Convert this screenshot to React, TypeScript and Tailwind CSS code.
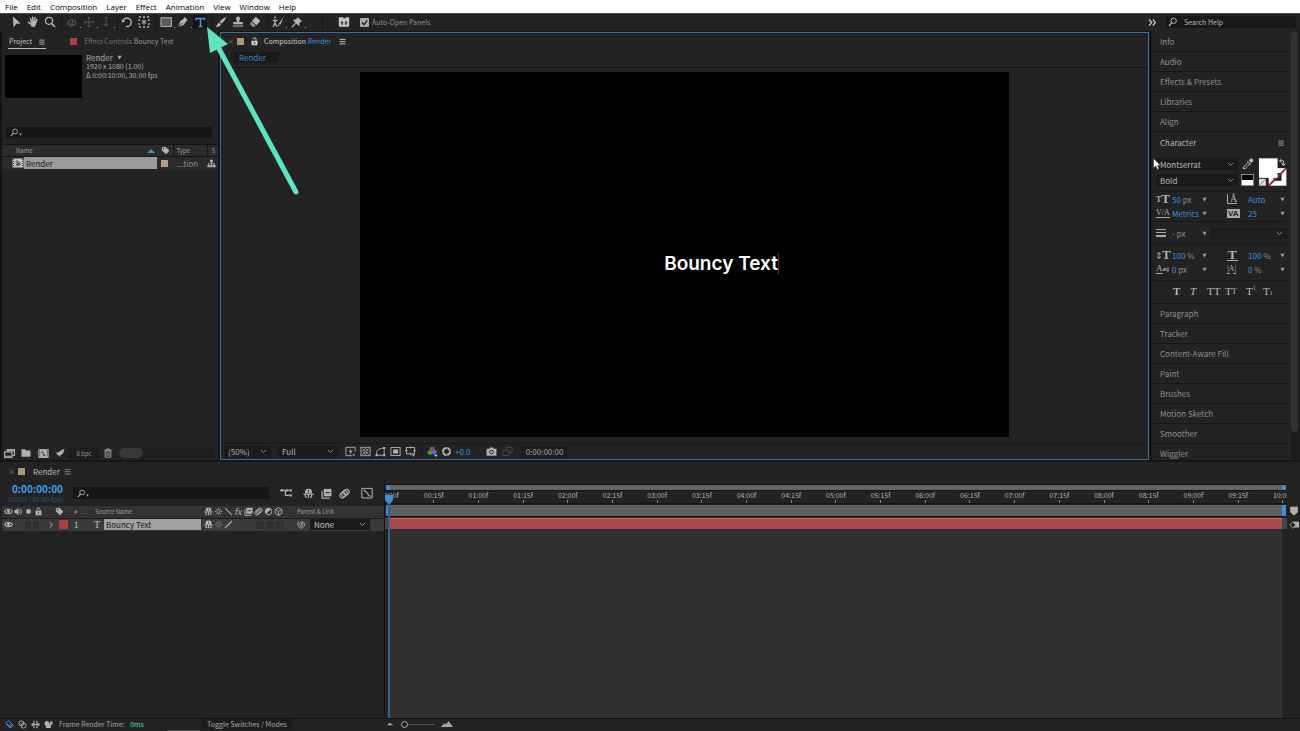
import React from "react";

type IconProps = { children: React.ReactNode; className?: string };

/* All glyph icons share a 12 x 12 grid and inherit the text colour. */
function Icon({ children, className = "size-3" }: IconProps) {
  return (
    <svg
      viewBox="0 0 12 12"
      className={"shrink-0 " + className}
      fill="none"
      stroke="currentColor"
      strokeWidth="1"
      aria-hidden="true"
    >
      {children}
    </svg>
  );
}

const icons = {
  select: <path d="M3 0.4 L10.6 7.6 L6.4 7.8 L3.4 11.2 Z" fill="currentColor" stroke="none" />,
  hand: (
    <g strokeLinecap="round" strokeWidth="1.5">
      <path d="M3.4 2.6 L4.6 6 M5.7 1.2 L6 5.6 M8 1.6 L7.5 5.8 M10 3.4 L8.8 6.8 M1.4 6 L3.6 8" />
      <path d="M3.6 7 L5 5.4 L8.8 5.8 L8.6 8.4 L7.4 10.8 L5 10.6 Z" fill="currentColor" strokeWidth="0.6" />
    </g>
  ),
  zoom: (
    <g strokeWidth="1.2">
      <circle cx="5" cy="4.8" r="3.5" />
      <path d="M7.6 7.4 L11 11" strokeWidth="1.6" />
    </g>
  ),
  orbit: (
    <g strokeWidth="1.2">
      <path d="M3.5 7.5 A3.4 2.4 0 1 1 9.5 6.5 M2.5 6 C0 8 3 9.6 6 9.2 M4.6 7.4 L7 9.2 L4.8 11" />
      <circle cx="8" cy="6.8" r="1.8" />
    </g>
  ),
  pan: (
    <g>
      <path d="M6 1 V11 M1 6 H11" />
      <path d="M4.4 2.4 L6 0.6 L7.6 2.4 Z M4.4 9.6 L6 11.4 L7.6 9.6 Z M2.4 4.4 L0.6 6 L2.4 7.6 Z M9.6 4.4 L11.4 6 L9.6 7.6 Z" fill="currentColor" stroke="none" />
    </g>
  ),
  dolly: <path d="M6 1 V10 M3.8 7.6 L6 10.4 L8.2 7.6 M4.6 1.4 H7.4" />,
  rotate: (
    <g strokeWidth="1.3">
      <path d="M2.2 4.4 A4.2 4.2 0 1 1 5 10.4" />
      <path d="M0.4 3.4 L1.2 6.6 L4.6 5.2 Z" fill="currentColor" stroke="none" />
    </g>
  ),
  anchor: (
    <g strokeWidth="1.3">
      <rect x="1" y="1" width="10" height="10" strokeDasharray="2 2" />
      <path d="M6 3.4 V8.6 M3.4 6 H8.6 M4 4 L8 8 M8 4 L4 8" strokeWidth="0.8" />
    </g>
  ),
  rect: <rect x="1" y="1.8" width="10.4" height="8.6" fill="#5a5a5a" />,
  pen: (
    <g>
      <path d="M7.4 0.8 L10.8 4.2 L9.4 5 L6.6 9 L1.4 10.8 L3 5.6 L6.8 2.4 Z" fill="currentColor" stroke="none" />
      <path d="M1.6 10.6 L5.4 6.8" stroke="#232323" strokeWidth="0.8" />
    </g>
  ),
  brush: (
    <path d="M11.4 0.6 C8 2.6 6 4.2 4.6 6 L6.6 7.8 C8.2 6 10.4 3.8 11.4 0.6 Z M4 6.6 L6 8.6 C5 10.6 3 11.2 0.6 11 C2.4 10 2 7.6 4 6.6 Z" fill="currentColor" stroke="none" />
  ),
  stamp: (
    <path d="M6 0.6 A2 2 0 0 1 7.6 3.8 L7 6 H10.8 V8.2 H1.2 V6 H5 L4.4 3.8 A2 2 0 0 1 6 0.6 Z M0.8 9.4 H11.2 V10.6 H0.8 Z" fill="currentColor" stroke="none" />
  ),
  eraser: (
    <g>
      <path d="M6.8 0.8 L11.4 5 L7.4 9.2 L2.8 5 Z" fill="currentColor" stroke="none" />
      <path d="M2.4 5.6 L6.8 9.8 L5.6 10.8 H3.6 L1 8.2 Z" stroke="none" fill="currentColor" opacity="0.75" />
    </g>
  ),
  roto: (
    <g strokeWidth="1.2">
      <path d="M3 3 V7 L1 11 M3 7 L5 10.6 M0.8 4.6 H5.4" />
      <circle cx="3" cy="1.4" r="0.9" fill="currentColor" stroke="none" />
      <path d="M11.6 1 L6.8 7.4 L8.4 8.8 Z M6.6 8 L7.8 9.2 L5.2 11 Z" fill="currentColor" stroke="none" />
    </g>
  ),
  pin: (
    <g>
      <path d="M6.6 1 L11 5.4 L9.8 5.8 L8.4 7.2 L8.4 9.4 L7.6 9.8 L2.2 4.4 L2.6 3.6 L4.8 3.6 L6.2 2.2 Z" fill="currentColor" stroke="none" />
      <path d="M4.8 7.2 L1 11" strokeWidth="1.2" />
    </g>
  ),
  openPanels: (
    <g>
      <path d="M0.8 1.2 H5 L6 2.6 H7 L8 1.2 H11.2 V10.8 H0.8 Z" fill="currentColor" stroke="none" />
      <path d="M4 5 V9 M8 5 V9 M2.8 7 H5.2 M6.8 7 H9.2" stroke="#232323" />
    </g>
  ),
  menu: <path d="M2 3.2 H10 M2 6.2 H10 M2 9.2 H10" strokeWidth="1.2" />,
  lock: (
    <g>
      <rect x="2" y="5" width="8" height="6" fill="currentColor" stroke="none" />
      <path d="M4 5 V3.4 A2 2 0 0 1 8 3.4 V5" strokeWidth="1.3" />
      <path d="M6 6.8 V9.2" stroke="#232323" />
    </g>
  ),
  unlock: (
    <g>
      <rect x="2" y="5" width="8" height="6" fill="currentColor" stroke="none" />
      <path d="M4 3.2 V3 A2 2 0 0 1 8 3 V5" strokeWidth="1.3" />
      <path d="M5 7 H7 M5 9 H7" stroke="#232323" />
    </g>
  ),
  search: (
    <g strokeWidth="1.2">
      <circle cx="6.8" cy="4.6" r="3.2" />
      <path d="M4.6 6.8 L1 10.8" strokeWidth="1.4" />
    </g>
  ),
  tag: (
    <g>
      <path d="M1 1.6 L6 1 L11.2 6.2 L6.8 11 L1.2 6 Z" fill="currentColor" stroke="none" />
      <circle cx="3.4" cy="3.6" r="0.9" fill="#232323" stroke="none" />
    </g>
  ),
  tree: (
    <g>
      <path d="M4.2 1 H7.8 V4.4 H4.2 Z M0.6 8 H3.8 V11 H0.6 Z M4.4 8 H7.6 V11 H4.4 Z M8.2 8 H11.4 V11 H8.2 Z" fill="currentColor" stroke="none" />
      <path d="M6 4 V8 M2.2 8 V6.2 H9.8 V8" />
    </g>
  ),
  film: (
    <g>
      <rect x="0.5" y="1.5" width="11" height="9" fill="#c4c4c4" stroke="none" />
      <path d="M1.6 2 V10 M10.4 2 V10" stroke="#333" strokeDasharray="1 1" />
      <circle cx="5" cy="4.8" r="1.6" fill="#4a8a8a" stroke="none" />
      <path d="M5.6 5 H8.4 V8.6 H5.6 Z" fill="#a04848" stroke="none" />
      <path d="M3.6 8.6 L5.2 6 L6.6 8.6 Z" fill="#333" stroke="none" />
    </g>
  ),
  footage: (
    <g strokeWidth="1.2">
      <path d="M3.4 1.8 H11.4 V8 H3.4 Z" />
      <path d="M0.6 4.2 H8.8 V10.4 H0.6 Z" fill="#232323" />
      <path d="M0.8 9 H8.6 M4 3 H11" />
    </g>
  ),
  folder: <path d="M0.6 1.6 H5 L6 3 H11.4 V10.6 H0.6 Z" fill="currentColor" stroke="none" />,
  newComp: (
    <g>
      <rect x="0.4" y="1.2" width="11.2" height="9.6" fill="currentColor" stroke="none" />
      <path d="M1.8 2 V10 M10.2 2 V10" stroke="#232323" strokeDasharray="1 1" />
      <circle cx="4.8" cy="4.8" r="1.3" fill="#5a5a5a" stroke="none" />
      <path d="M4.6 8.8 L6.6 5.4 L8.4 8.8 Z" fill="#5a5a5a" stroke="none" />
    </g>
  ),
  rocket: (
    <path d="M11.4 0.6 L10 6 L6.4 9.2 L6 11.4 L4.8 8.8 L2.4 8.8 L2.8 7 L0.6 6 L3.6 5 Z" fill="currentColor" stroke="none" />
  ),
  trash: (
    <g>
      <path d="M2.6 3.4 H9.4 V11 H2.6 Z M1.6 2.6 H10.4 M4.4 2.4 V1.2 H7.6 V2.4" />
      <path d="M4.8 4.6 V9.8 M7.2 4.6 V9.8" />
    </g>
  ),
  fastPreview: (
    <g>
      <path d="M8 10.6 H1 V1.4 H11 V6" />
      <path d="M6.6 2.6 L4.2 6.4 H6 L5 9.6 L8.4 5.4 H6.6 Z" fill="currentColor" stroke="none" />
      <path d="M8 9 L9.6 11 L11.2 9 Z" fill="currentColor" stroke="none" />
    </g>
  ),
  transparency: (
    <g>
      <rect x="1" y="1.4" width="10" height="9.2" />
      <path d="M2.4 2.8 L9.6 9.4 M9.6 2.8 L2.4 9.4 M6 2.4 L9 5.8 L6 9.4 L3 5.8 Z" strokeWidth="0.8" />
    </g>
  ),
  mask: (
    <g>
      <path d="M1.8 10 V7 C2 4 5 2.4 10 2.4 V10 Z" />
      <path d="M0.6 8.8 H3 V11.2 H0.6 Z M8.8 8.8 H11.2 V11.2 H8.8 Z M8.8 1.2 H11.2 V3.4 H8.8 Z" fill="currentColor" stroke="none" />
    </g>
  ),
  region: (
    <g>
      <rect x="1" y="1.6" width="10" height="8.8" />
      <rect x="3.4" y="3.8" width="5.4" height="4.4" fill="currentColor" stroke="none" />
    </g>
  ),
  guides: (
    <g>
      <rect x="1.6" y="1.6" width="8.8" height="7" />
      <path d="M0 5 H3 M9 5 H12 M6 0.4 V2.8 M6 7.4 V10" />
      <path d="M7.4 9.4 H11 L9.2 11.6 Z" fill="currentColor" stroke="none" />
    </g>
  ),
  channels: (
    <g stroke="none">
      <circle cx="5.6" cy="3.4" r="2.7" fill="#c83a3a" />
      <circle cx="3.4" cy="7.2" r="2.7" fill="#3a9a4a" />
      <circle cx="8" cy="6.8" r="2.7" fill="#3f6fd8" />
      <path d="M7.6 9.6 H11.6 L9.6 11.9 Z" fill="#c8c8c8" />
    </g>
  ),
  aperture: (
    <g>
      <circle cx="6" cy="6" r="3.8" strokeWidth="2.4" />
      <path d="M6 0.8 L8.2 4.6 M11 5 L7 7.6 M7.4 11 L4.4 8 M1 7.6 L4.4 5" stroke="#232323" strokeWidth="0.6" />
    </g>
  ),
  camera: (
    <g>
      <path d="M0.6 3 H3.4 L4.4 1.6 H7.6 L8.6 3 H11.4 V10.6 H0.6 Z" fill="currentColor" stroke="none" />
      <circle cx="6" cy="6.6" r="2" stroke="#232323" />
    </g>
  ),
  snapshot: (
    <g>
      <rect x="4.4" y="1.6" width="6.6" height="5.4" />
      <rect x="1" y="5" width="6.6" height="5.4" fill="#232323" />
    </g>
  ),
  eye: (
    <g>
      <path d="M0.8 6 C3 2 9 2 11.2 6 C9 10 3 10 0.8 6 Z" strokeWidth="1.4" />
      <circle cx="6" cy="6" r="1.9" fill="currentColor" stroke="none" />
    </g>
  ),
  audio: (
    <g>
      <path d="M0.6 4 H2.8 L6 1 V11 L2.8 8 H0.6 Z" fill="currentColor" stroke="none" />
      <path d="M7.4 3.6 Q9 6 7.4 8.4 M9 2 Q12 6 9 10" />
    </g>
  ),
  solo: <circle cx="6" cy="6" r="3.2" fill="currentColor" stroke="none" />,
  shy: (
    <g>
      <path d="M2.2 5.8 V4 A3.8 3.2 0 0 1 9.8 4 V5.8 Z" fill="currentColor" stroke="none" />
      <path d="M0.4 6.6 H11.6 M6 6 V11 M2.6 7 V10.2 M9.4 7 V10.2 M2.6 10 H4.4 M7.6 10 H9.4" strokeWidth="1.3" />
      <path d="M6 2 V5" stroke="#3a3a3a" />
    </g>
  ),
  sun: (
    <g>
      <circle cx="6" cy="6" r="2.2" />
      <path d="M6 0.8 V3 M6 9 V11.2 M0.8 6 H3 M9 6 H11.2 M2.4 2.4 L3.8 3.8 M8.2 8.2 L9.6 9.6 M9.6 2.4 L8.2 3.8 M2.4 9.6 L3.8 8.2" />
    </g>
  ),
  backslash: <path d="M1.6 1.6 L10.4 10.4" strokeWidth="1.4" />,
  slash: <path d="M10.8 1.2 L1.2 10.8" strokeWidth="1.4" />,
  blend: (
    <g>
      <path d="M3 1 H11.4 V9 H3 Z" fill="currentColor" stroke="none" />
      <path d="M1.2 3 V11 H9.6" strokeWidth="1.3" />
      <path d="M5 5 H9.6" stroke="#232323" strokeWidth="1.2" />
    </g>
  ),
  motionBlur: (
    <g strokeWidth="1.2">
      <ellipse cx="8" cy="4.4" rx="2.8" ry="3.2" transform="rotate(40 8 4.4)" />
      <ellipse cx="6" cy="6" rx="2.8" ry="3.4" transform="rotate(40 6 6)" />
      <ellipse cx="4" cy="7.6" rx="2.8" ry="3.2" transform="rotate(40 4 7.6)" />
    </g>
  ),
  adjust: (
    <g>
      <circle cx="6" cy="6" r="4.4" strokeWidth="1.2" />
      <path d="M9.1 2.9 A4.4 4.4 0 0 0 2.9 9.1 Z" fill="currentColor" stroke="none" />
    </g>
  ),
  cube: <path d="M6 1 L10.4 3.4 V8.6 L6 11 L1.6 8.6 V3.4 Z M1.6 3.4 L6 6 L10.4 3.4 M6 6 V11" strokeWidth="1.2" />,
  flow: (
    <g strokeWidth="1.2">
      <path d="M0.6 3.4 H9 M5.4 3.4 V8.4 H9" />
      <path d="M0.4 2.2 H3 V4.6 H0.4 Z M6 2.4 H8 V4.4 H6 Z M9.4 2.2 H11.8 V4.6 H9.4 Z M9.4 7.2 H11.8 V9.6 H9.4 Z" fill="currentColor" stroke="none" />
    </g>
  ),
  graph: (
    <g>
      <path d="M0.8 1.4 H11.2 V11 H0.8 Z" />
      <path d="M2.4 3 C6 3 6 9 9.8 9.4" strokeWidth="1.2" />
    </g>
  ),
  spiral: <path d="M6.4 6.4 C5.4 7 4.8 5 6.4 4.6 C8.6 4.4 8.6 8.2 6 8.4 C2.6 8.4 2.6 3 6.4 2.6 C11 2.4 11.4 9.4 6.4 10.8 C0.6 11 0.2 4 2.6 1.8" />,
  eyedrop: (
    <g>
      <path d="M8.4 0.8 C10 -0.2 12 1.8 11 3.4 L9.4 5 L6.8 2.6 Z M5.6 2.8 L9.2 6.4 L8.4 7 L5 3.6 Z" fill="currentColor" stroke="none" />
      <path d="M6.4 4.2 L1.6 9 L1.2 11 L3.2 10.4 L8 5.8" />
    </g>
  ),
  layersBlue: (
    <g strokeWidth="1.2">
      <path d="M1 3.6 L5 1 L9 5 L5.6 8 Z M3 6.4 L6.6 10.8 L11 7.6 L8 4 M2 5 L6 9.6 L10 6" />
    </g>
  ),
  circles: (
    <g strokeWidth="1.3">
      <circle cx="4.4" cy="4.4" r="3.2" />
      <circle cx="7.4" cy="7.4" r="3.4" />
    </g>
  ),
  brackets: (
    <g strokeWidth="1.6">
      <path d="M4 1 V11 M8 1 V11 M1.6 4 V8 M10.4 4 V8 M1.6 6 H10.4" />
    </g>
  ),
  renderTime: <path d="M0.8 3 L4 1 L7 3 V5 H8 V2 H11.4 V6.4 H9 V10.6 H2.4 V7 H0.8 Z" fill="currentColor" stroke="none" />,
};

function Triangle({ className }: { className: string }) {
  return (
    <svg viewBox="0 0 6 6" className={"shrink-0 " + className} fill="currentColor" aria-hidden="true">
      <path d="M0.4 0.8 H5.6 L3 5.4 Z" />
    </svg>
  );
}

function Chevron() {
  return (
    <svg viewBox="0 0 8 5" className="pointer-events-none w-[7px] shrink-0 text-[#9a9a9a]" fill="none" stroke="currentColor" aria-hidden="true">
      <path d="M1 1 L4 4 L7 1" />
    </svg>
  );
}

function Drop({ label, value, className }: { label: string; value: string; className: string }) {
  return (
    <div className={"flex items-center bg-[#1b1b1b] pr-1 " + className}>
      <select aria-label={label} className="h-full min-w-0 flex-1 appearance-none bg-transparent leading-[11px] outline-none">
        <option>{value}</option>
      </select>
      <Chevron />
    </div>
  );
}

function Tool({ label, icon, dim, corner }: { label: string; icon: React.ReactNode; dim?: boolean; corner?: boolean }) {
  return (
    <button aria-label={label} className={"relative flex h-4 w-[17px] items-center justify-center pr-px " + (dim ? "text-[#505050]" : "text-[#b4b4b4]")}>
      <Icon>{icon}</Icon>
      {corner && <span className="absolute right-0 bottom-0.5 size-px bg-[#9a9a9a]" />}
    </button>
  );
}

function Rule({ className }: { className: string }) {
  return (
    <span className={"flex justify-center " + className}>
      <span className="h-4 w-px bg-[#191919]" />
    </span>
  );
}

function Toolbar() {
  return (
    <div className="flex h-[18px] shrink-0 items-center border-t border-[#4a4a4a] bg-[#232323] pr-1 pb-px pl-2 text-[7px] text-[#9a9a9a]">
      <Tool label="Selection" icon={icons.select} />
      <Tool label="Hand" icon={icons.hand} />
      <Tool label="Zoom" icon={icons.zoom} />
      <Rule className="w-[5px]" />
      <Tool label="Orbit" icon={icons.orbit} dim corner />
      <Tool label="Pan camera" icon={icons.pan} dim corner />
      <Tool label="Dolly" icon={icons.dolly} dim corner />
      <Rule className="w-1" />
      <Tool label="Rotation" icon={icons.rotate} />
      <Tool label="Anchor point" icon={icons.anchor} />
      <Rule className="w-[5px]" />
      <Tool label="Rectangle" icon={icons.rect} corner />
      <Tool label="Pen" icon={icons.pen} corner />
      <button aria-label="Type" className="flex h-4 w-[17px] items-center justify-center pr-px">
        <span className="flex h-[14px] w-[14px] items-center justify-center bg-[#131619] text-[#4b97de]">
          <Icon className="size-[11px]">
            <path d="M1.4 3.6 V1.6 H10.6 V3.6 M6 1.6 V10.4 M4 10.4 H8" strokeWidth="1.6" />
          </Icon>
        </span>
      </button>
      <Rule className="w-1" />
      <Tool label="Brush" icon={icons.brush} />
      <Tool label="Clone stamp" icon={icons.stamp} />
      <Tool label="Eraser" icon={icons.eraser} />
      <Rule className="w-1.5" />
      <Tool label="Roto brush" icon={icons.roto} corner />
      <Rule className="w-0.5" />
      <Tool label="Puppet pin" icon={icons.pin} corner />
      <Rule className="w-8" />
      <button aria-label="Panels" className="text-[#c4c4c4]">
        <Icon>{icons.openPanels}</Icon>
      </button>
      <label className="ml-2.5 flex items-center gap-[3px]">
        <span className="relative flex">
          <input type="checkbox" defaultChecked className="size-[9px] appearance-none rounded-[1px] bg-[#a9a9a9]" />
          <svg viewBox="0 0 9 9" className="pointer-events-none absolute inset-0 size-[9px]" fill="none" stroke="#232323" strokeWidth="1.4" aria-hidden="true">
            <path d="M2 4.6 L4 6.6 L7.2 2.4" />
          </svg>
        </span>
        <span className="text-[#8e8e8e]">Auto-Open Panels</span>
      </label>
      <div className="ml-auto flex items-center gap-[9px]">
        <button aria-label="More workspaces" className="text-[#c4c4c4]">
          <Icon className="size-[9px]">
            <path d="M1.4 2 L5 6 L1.4 10 M6.4 2 L10 6 L6.4 10" strokeWidth="1.6" />
          </Icon>
        </button>
        <div className="flex h-3 w-[130px] items-center gap-1.5 bg-[#171717] pl-0.5 text-[#b8b8b8]">
          <Icon className="size-[10px]">{icons.search}</Icon>
          <input aria-label="Search Help" placeholder="Search Help" className="h-full min-w-0 flex-1 bg-transparent outline-none placeholder:text-[#b8b8b8]" />
        </div>
      </div>
    </div>
  );
}

function SearchBox({ label, className }: { label: string; className: string }) {
  return (
    <div className={"flex items-center bg-[#161616] pl-1 text-[#b0b0b0] " + className}>
      <Icon className="size-[9px]">{icons.search}</Icon>
      <Triangle className="mt-1 size-[3px]" />
      <input aria-label={label} className="h-full min-w-0 flex-1 bg-transparent outline-none" />
    </div>
  );
}

function ProjectPanel() {
  return (
    <section className="flex w-[216px] shrink-0 flex-col overflow-hidden bg-[#232323]">
      <div className="flex h-[22px] items-start pt-1 pl-1.5 text-[7px]">
        <button className="flex items-center gap-1.5 border-b border-[#c0c0c0] pt-px pb-px text-[#c4c4c4]">
          <span className="pl-px">Project</span>
          <Icon className="size-2">{icons.menu}</Icon>
        </button>
        <button className="ml-6 flex items-center gap-[7px] pt-px text-[#747474]">
          <span className="size-[7px] bg-[#b03d42]" />
          <span>
            Effect Controls <span className="text-[#969696]">Bouncy Text</span>
          </span>
        </button>
      </div>
      <div className="flex h-[74px] gap-1 pl-[3px]">
        <div className="mt-0.5 h-[43px] w-[77px] bg-black" />
        <div className="text-[7px] leading-[9px] text-[#aaaaaa]">
          <p className="flex items-center gap-1 text-[8px]">Render <Triangle className="size-[5px]" /></p>
          <p>1920 x 1080 (1.00)</p>
          <p>Δ 0:00:10:00, 30.00 fps</p>
        </div>
      </div>
      <SearchBox label="Search project" className="mr-1.5 ml-1 h-[11px]" />
      <table className="mt-1.5 w-full table-fixed border-collapse text-left">
        <thead>
          <tr className="h-3 border-y border-[#141414] bg-[#2c2c2c] text-[6px] text-[#9c9c9c]">
            <th className="w-[155px] p-0 font-normal">
              <span className="flex items-center justify-between pr-0.5 pl-[14px]">
                Name
                <svg viewBox="0 0 8 4" className="h-1 w-2" fill="#3f8fd8" aria-hidden="true"><path d="M0 4 L4 0 L8 4 Z" /></svg>
              </span>
            </th>
            <th className="w-4 p-0 text-[#b4b4b4]"><Icon className="ml-1 size-[9px]">{icons.tag}</Icon></th>
            <th className="w-[34px] border-l border-[#191919] p-0 pl-[3px] font-normal">Type</th>
            <th className="border-l border-[#191919] p-0 pl-1 font-normal">S</th>
          </tr>
        </thead>
        <tbody>
          <tr className="h-3 bg-[#2a2a2a]">
            <td className="p-0">
              <span className="flex h-3 items-center pl-2.5">
                <Icon className="size-3">{icons.film}</Icon>
                <span className="flex h-3 flex-1 items-center bg-[#9c9c9c] pl-0.5 text-[#1a1a1a]">Render</span>
              </span>
            </td>
            <td className="p-0"><span className="ml-1 block size-[7px] bg-[#ada084]" /></td>
            <td className="p-0 pl-1 text-[#8c8c8c]">...tion</td>
            <td className="p-0 text-[#b4b4b4]"><Icon className="size-[9px]">{icons.tree}</Icon></td>
          </tr>
        </tbody>
      </table>
      <div className="mt-auto flex h-[14px] items-center pl-0.5 text-[#b0b0b0]">
        <button aria-label="Interpret footage" className="w-[17px]"><Icon className="size-[11px]">{icons.footage}</Icon></button>
        <button aria-label="New folder" className="w-[17px]"><Icon className="size-[10px]">{icons.folder}</Icon></button>
        <button aria-label="New composition" className="w-[17px]"><Icon className="size-[11px]">{icons.newComp}</Icon></button>
        <button aria-label="Project settings" className="w-[14px]"><Icon className="size-[10px]">{icons.rocket}</Icon></button>
        <button className="mr-0.5 h-[11px] w-[30px] bg-[#1d1d1d] text-[6px] text-[#9a9a9a]">8 bpc</button>
        <button aria-label="Delete" className="w-[18px]"><Icon className="ml-0.5 size-[10px]">{icons.trash}</Icon></button>
        <div className="mr-1 flex h-3 flex-1 items-center bg-[#1f1f1f]"><span className="h-2.5 w-6 rounded-full bg-[#383838]" /></div>
      </div>
    </section>
  );
}

function CompositionPanel() {
  return (
    <section className="flex min-w-0 flex-1 flex-col border border-[#3a6ea3] bg-[#232323]">
      <div className="flex h-[17px] shrink-0 items-center pl-1.5 text-[7px] text-[#d0d0d0]">
        <span className="w-1 text-[#777777]">×</span>
        <span className="ml-1.5 size-[7px] bg-[#a89878]" />
        <Icon className="ml-1.5 size-[9px]">{icons.unlock}</Icon>
        <span className="ml-[5px]">Composition <span className="text-[#3f8fd8]">Render</span></span>
        <Icon className="ml-[7px] size-[9px]">{icons.menu}</Icon>
      </div>
      <div className="flex h-[18px] shrink-0 items-end border-b border-[#161616] pb-1 pl-3">
        <button className="h-[11px] w-[46px] bg-[#1b1b1b] pl-1.5 text-left text-[#3f86c8]">Render</button>
      </div>
      <div className="flex min-h-0 flex-1 justify-center overflow-hidden pt-1 pb-1.5">
        <div className="flex aspect-video h-full items-center justify-center bg-black pt-[17px] pl-[74px]">
          <span className="flex h-[21px] items-center border-r border-[#4a3434] font-['Inter'] text-[19px] font-semibold whitespace-nowrap text-white">
            Bouncy Text
          </span>
        </div>
      </div>
      <div className="flex h-4 shrink-0 items-center gap-[3px] border-t border-[#1a1a1a] pl-[3px] text-[#b0b0b0]">
        <Drop label="Magnification" value="(50%)" className="h-3 w-[47px] pl-1" />
        <Drop label="Resolution" value="Full" className="ml-1 h-3 w-[60px] pl-1" />
        <div className="ml-1 flex items-center gap-1">
          {[icons.fastPreview, icons.transparency, icons.mask, icons.region, icons.guides].map((icon, i) => (
            <button key={i} aria-label={["Fast previews", "Transparency grid", "Mask visibility", "Region of interest", "Guides"][i]}>
              <Icon className="size-[11px]">{icon}</Icon>
            </button>
          ))}
        </div>
        <span className="mx-0.5 h-3 w-px bg-[#1a1a1a]" />
        <button aria-label="Channels"><Icon className="size-[11px]">{icons.channels}</Icon></button>
        <button aria-label="Reset exposure"><Icon className="size-[11px]">{icons.aperture}</Icon></button>
        <span className="text-[#3f8fd8]">+0.0</span>
        <button aria-label="Take snapshot" className="ml-3"><Icon className="size-[11px]">{icons.camera}</Icon></button>
        <button aria-label="Show snapshot" className="ml-0.5 text-[#484848]"><Icon className="size-[11px]">{icons.snapshot}</Icon></button>
        <span className="ml-1.5 flex h-3 w-[46px] items-center justify-center bg-[#1d1d1d] text-[#a0a0a0]">0:00:00:00</span>
      </div>
    </section>
  );
}

type Cell = { icon: React.ReactNode; value: string; unit?: string };

function CharRow({ left, right }: { left: Cell; right: Cell }) {
  return (
    <div className="flex h-[14px] items-center">
      {[left, right].map((c, i) => (
        <div key={i} className={"flex items-center " + (i === 0 ? "w-[71px]" : "flex-1")}>
          <span className={"flex items-end font-['Liberation_Serif'] font-bold text-[#b0b0b0] " + (i === 0 ? "w-4" : "w-[21px]")}>{c.icon}</span>
          <span className="flex-1 text-[#3f8fd8]">{c.value} <span className="text-[#8c8c8c]">{c.unit}</span></span>
          <Triangle className={"size-[5px] text-[#9a9a9a] " + (i === 0 ? "mr-5" : "mr-0.5")} />
        </div>
      ))}
    </div>
  );
}

const small = "text-[8px] leading-[10px]";
const large = "text-[13px] leading-3";

function CharacterPanel() {
  return (
    <div className="flex flex-col border-b border-[#171717] pr-[3px] pb-0.5">
      <div className="flex h-[21px] items-center justify-between pr-0.5 pl-2 text-[#b8b8b8]">
        <span>Character</span>
        <Icon className="size-2">{icons.menu}</Icon>
      </div>
      <div className="flex h-[39px] border-b border-[#1a1a1a] pt-[5px] pl-1 text-[#b8b8b8]">
        <div className="flex flex-col gap-1">
          <Drop label="Font family" value="Montserrat" className="h-3 w-[82px] pl-1" />
          <Drop label="Font style" value="Bold" className="h-3 w-[82px] pl-1" />
        </div>
        <div className="ml-0.5 flex w-4 flex-col items-center gap-1">
          <Icon className="size-3">{icons.eyedrop}</Icon>
          <span className="h-3 w-[13px] border border-[#8a8a8a] bg-linear-to-b from-black from-50% to-white to-50%" />
        </div>
        <svg viewBox="0 0 30 30" className="ml-0.5 size-[30px]" aria-hidden="true">
          <rect x="11" y="10" width="18" height="18" fill="#fff" />
          <rect x="16" y="15" width="8" height="8" fill="#232323" />
          <path d="M11 28 L29 10" stroke="#8f2438" strokeWidth="2" />
          <rect x="1" y="0" width="19" height="20" fill="#fff" />
          <rect x="1" y="21" width="7" height="7" fill="#ddd" />
          <path d="M1 28 L8 21" stroke="#777" />
          <path d="M22 2.5 H26 V7 M24 5 L26 7.5 L28 5 M24 0.8 L22 2.5 L24 4.2" stroke="#c0c0c0" fill="none" />
        </svg>
      </div>
      <div className="border-b border-[#1a1a1a] pb-px pl-1">
        <CharRow
          left={{ icon: <><span className={small}>T</span><span className={large}>T</span></>, value: "50", unit: "px" }}
          right={{ icon: <span className="border-b border-l border-[#a8a8a8] pl-0.5 text-[10px] leading-[9px] font-normal">Å</span>, value: "Auto" }}
        />
        <CharRow
          left={{ icon: <span className="border-b border-[#a8a8a8] text-[8px] leading-[9px] font-normal">V/A</span>, value: "Metrics" }}
          right={{ icon: <span className="bg-[#a8a8a8] px-px font-['Liberation_Sans'] text-[8px] leading-[9px] text-[#232323]">VA</span>, value: "25" }}
        />
      </div>
      <div className="flex h-[23px] items-center border-b border-[#1a1a1a] pl-1">
        <span className="flex w-4 flex-col gap-0.5">
          <span className="h-px w-2.5 bg-[#a8a8a8]" />
          <span className="h-px w-2.5 bg-[#a8a8a8]" />
          <span className="h-0.5 w-2.5 bg-[#a8a8a8]" />
        </span>
        <span className="flex-1 text-[#8c8c8c]">- px</span>
        <Triangle className="mr-1 size-[5px] text-[#9a9a9a]" />
        <div className="flex h-[11px] w-[76px] items-center border border-[#191919] bg-[#1e1e1e] pr-[3px]">
          <select aria-label="Stroke order" className="h-full min-w-0 flex-1 appearance-none bg-transparent outline-none" />
          <Chevron />
        </div>
      </div>
      <div className="border-b border-[#1a1a1a] pt-[3px] pb-1 pl-1">
        <CharRow
          left={{ icon: <><Icon className="h-[11px] w-1.5"><path d="M6 0 V12 M2 3.6 L6 0 L10 3.6 M2 8.4 L6 12 L10 8.4" strokeWidth="1.8" /></Icon><span className={large}>T</span></>, value: "100", unit: "%" }}
          right={{ icon: <span className="border-b border-[#a8a8a8] px-px text-[13px] leading-[11px]">T</span>, value: "100", unit: "%" }}
        />
        <CharRow
          left={{ icon: <><span className="border-b border-[#a8a8a8] text-[9px] leading-[9px] font-normal">A</span><span className="text-[7px] leading-[9px]">a‡</span></>, value: "0", unit: "px" }}
          right={{ icon: <span className="border-b border-dashed border-[#a8a8a8] text-[8px] leading-[9px] font-normal">|A|</span>, value: "0", unit: "%" }}
        />
      </div>
      <div className="flex h-5 items-center pl-[21px] font-['Liberation_Serif'] text-[11px] leading-[12px] text-[#b8b8b8]">
        <button aria-label="Faux bold" className="w-[17px] text-left font-bold">T</button>
        <button aria-label="Faux italic" className="w-[17px] text-left italic">T</button>
        <button aria-label="All caps" className="w-[18px] text-left">TT</button>
        <button aria-label="Small caps" className="flex w-[21px] items-end">T<span className="text-[8px] leading-[11px]">T</span></button>
        <button aria-label="Superscript" className="flex w-[17px] items-start">T<span className="text-[6px] leading-[7px]">1</span></button>
        <button aria-label="Subscript" className="flex items-end">T<span className="text-[6px] leading-[7px]">1</span></button>
      </div>
    </div>
  );
}

function PanelRow({ name }: { name: string }) {
  return (
    <button className="flex h-5 shrink-0 items-center border-b border-[#171717] pl-2 text-left text-[#8e8e8e]">{name}</button>
  );
}

function SidePanels() {
  return (
    <aside className="flex w-[148px] shrink-0 overflow-hidden bg-[#232323]">
      <div className="flex min-w-0 flex-1 flex-col overflow-hidden pt-px">
        {["Info", "Audio", "Effects & Presets", "Libraries", "Align"].map((n) => <PanelRow key={n} name={n} />)}
        <CharacterPanel />
        {["Paragraph", "Tracker", "Content-Aware Fill", "Paint", "Brushes", "Motion Sketch", "Smoother", "Wiggler"].map((n) => (
          <PanelRow key={n} name={n} />
        ))}
      </div>
      <div className="ml-px flex w-[9px] flex-col bg-[#1c1c1c] pr-0.5 pb-7">
        <span className="flex-1 rounded-sm bg-[#323232]" />
      </div>
    </aside>
  );
}

const switchIcons = [icons.shy, icons.sun, icons.backslash, null, icons.blend, icons.motionBlur, icons.adjust, icons.cube];

function LayerTable() {
  return (
    <table className="w-full table-fixed border-collapse text-left">
      <thead>
        <tr className="h-3 bg-[#323232] text-[6px] text-[#9c9c9c]">
          <th className="w-[53px] p-0">
            <span className="flex items-center gap-px pl-0.5 text-[#b0b0b0]">
              {[icons.eye, icons.audio, icons.solo, icons.lock].map((icon, i) => <Icon key={i} className="size-[9px]">{icon}</Icon>)}
            </span>
          </th>
          <th className="w-[15px] p-0 text-[#b0b0b0]"><Icon className="size-[9px]">{icons.tag}</Icon></th>
          <th className="w-[22px] p-0 pl-1 font-normal">#&nbsp;&nbsp;&nbsp;.</th>
          <th className="w-[111px] p-0 pl-[3px] font-normal">Source Name</th>
          <th className="w-[90px] p-0">
            <span className="flex items-center gap-px pl-px text-[#b0b0b0]">
              {switchIcons.map((icon, i) =>
                icon ? (
                  <Icon key={i} className="size-[9px]">{icon}</Icon>
                ) : (
                  <span key={i} className="w-[9px] text-[9px] leading-[11px] font-normal italic">fx</span>
                )
              )}
            </span>
          </th>
          <th className="p-0 pl-1 font-normal">Parent &amp; Link</th>
        </tr>
      </thead>
      <tbody>
        <tr className="h-3 border-t border-[#1c1c1c] bg-[#3a3a3a] text-[#c0c0c0]">
          <td className="p-0">
            <span className="flex items-center gap-0.5 pl-0.5">
              <Icon className="mr-2.5 size-[9px]">{icons.eye}</Icon>
              <span className="size-2 bg-[#303030]" />
              <span className="size-2 bg-[#303030]" />
              <Icon className="ml-1.5 size-2"><path d="M4 2 L8 6 L4 10" strokeWidth="1.3" /></Icon>
            </span>
          </td>
          <td className="p-0"><span className="ml-1 block size-[9px] bg-[#b03d42]" /></td>
          <td className="p-0 pl-1">1</td>
          <td className="p-0">
            <span className="flex h-3 items-center gap-1">
              <span className="w-2 text-right font-['Liberation_Serif'] text-[10px] leading-[11px]">T</span>
              <span className="mr-0.5 flex h-[11px] flex-1 items-center bg-[#a0a0a0] pl-0.5 text-[#1a1a1a]">Bouncy Text</span>
            </span>
          </td>
          <td className="p-0">
            <span className="flex items-center gap-px pl-px">
              <Icon className="size-[9px]">{icons.shy}</Icon>
              <Icon className="size-[9px] text-[#808080]">{icons.sun}</Icon>
              <Icon className="size-[9px]">{icons.slash}</Icon>
              <span className="ml-[22px] flex gap-0.5">
                <span className="size-2 bg-[#303030]" />
                <span className="size-2 bg-[#303030]" />
                <span className="size-2 bg-[#303030]" />
              </span>
            </span>
          </td>
          <td className="p-0">
            <span className="flex items-center gap-1 pl-1">
              <Icon className="size-[9px]">{icons.spiral}</Icon>
              <Drop label="Parent layer" value="None" className="h-[11px] w-[60px] pl-1" />
            </span>
          </td>
        </tr>
      </tbody>
    </table>
  );
}

const marks = Array.from({ length: 21 }, (_, i) => String(Math.floor(i / 2)).padStart(2, "0") + (i % 2 ? ":15f" : ":00f"));

function TimelineTracks() {
  return (
    <div className="relative flex min-w-0 flex-1 flex-col overflow-hidden border-l border-[#141414] bg-[#232323] pt-1">
      <div className="mx-px flex h-[7px] justify-between border-y border-[#161616] bg-[#646464]">
        <span className="w-1 rounded-l-full bg-[#3f8fd8]" />
        <span className="w-1 rounded-r-full bg-[#3f8fd8]" />
      </div>
      <div className="flex h-[13px] justify-between overflow-hidden border-b border-[#161616] px-1 text-[7px] text-[#b0b0b0]">
        {marks.map((m) => (
          <span key={m} className="flex w-0 flex-col items-center">
            <span className="leading-[9px]">{m}</span>
            <span className="h-1 w-px shrink-0 bg-[#8a8a8a]" />
          </span>
        ))}
      </div>
      <div className="mx-px mt-px flex h-3 justify-between border-b border-[#161616] bg-[#606060]">
        <span className="w-1 rounded-l-sm bg-[#3f8fd8]" />
        <span className="w-1 bg-[#3f8fd8]" />
      </div>
      <div className="mt-px h-[11px] bg-[#454545] pr-[5px] pl-1">
        <div className="h-full border-t border-[#c46a6a] bg-[#ab4a4c]" />
      </div>
      <div className="flex flex-1 pr-[5px] pl-1">
        <div className="flex-1 bg-[#303030]" />
      </div>
      <div className="absolute inset-y-0 left-0 flex w-2 flex-col items-center pt-[15px]">
        <svg viewBox="0 0 8 10" className="h-2.5 w-2 shrink-0" fill="#3f8fd8" aria-hidden="true">
          <path d="M0 0 H8 V5 L4 10 L0 5 Z" />
        </svg>
        <span className="w-0.5 flex-1 bg-[#34608c]" />
      </div>
    </div>
  );
}

function Timeline() {
  return (
    <section className="relative flex min-h-0 flex-[269_1_0%] flex-col bg-[#232323]">
      <div className="flex h-[18px] shrink-0 items-center pl-2 text-[#b8b8b8]">
        <span className="w-1 text-[7px] text-[#888888]">×</span>
        <span className="ml-1.5 size-[7px] bg-[#a89878]" />
        <span className="ml-2">Render</span>
        <Icon className="ml-[3px] size-[9px] text-[#8a8a8a]">{icons.menu}</Icon>
      </div>
      <div className="flex min-h-0 flex-1">
        <div className="w-[384px] shrink-0 pl-0.5">
          <div className="flex h-[26px] items-center">
            <div className="w-[71px] pr-2.5 text-right">
              <p className="text-[10px] leading-[11px] font-bold whitespace-nowrap text-[#3f9bea]">0:00:00:00</p>
              <p className="text-[7px] leading-[10px] whitespace-nowrap text-[#2c547c]">00000 (30.00 fps)</p>
            </div>
            <SearchBox label="Search layers" className="h-3 w-[196px]" />
            <div className="ml-[11px] flex items-center text-[#b0b0b0]">
              <button aria-label="Mini flowchart" className="w-[23px]"><Icon>{icons.flow}</Icon></button>
              <button aria-label="Hide shy layers" className="w-[18px]"><Icon className="size-[11px]">{icons.shy}</Icon></button>
              <button aria-label="Frame blending" className="w-[18px]"><Icon className="size-[11px]">{icons.blend}</Icon></button>
              <button aria-label="Motion blur" className="w-[22px]"><Icon className="size-[11px]">{icons.motionBlur}</Icon></button>
              <button aria-label="Graph editor"><Icon>{icons.graph}</Icon></button>
            </div>
          </div>
          <LayerTable />
        </div>
        <TimelineTracks />
        <div className="flex w-[13px] shrink-0 flex-col items-center gap-1 pt-[26px] text-[#b0b0b0]">
          <Icon className="size-2.5"><path d="M1.4 1 H10.6 V7.4 L6 11.4 L1.4 7.4 Z" fill="currentColor" stroke="none" /></Icon>
          <Icon className="size-2.5"><path d="M6 2 H12 V9 H6 Z" fill="currentColor" stroke="none" /><path d="M4.6 2 L1 6 L4.6 10 L8 6 Z" fill="#232323" /></Icon>
        </div>
      </div>
      <div className="flex h-[13px] shrink-0 items-center border-t border-[#141414] pb-0.5 pl-[5px] text-[7px] text-[#a6a6a6]">
        <div className="flex items-center gap-1 text-[#b0b0b0]">
          <Icon className="size-[9px] text-[#3f8fd8]">{icons.layersBlue}</Icon>
          <Icon className="size-[9px]">{icons.circles}</Icon>
          <Icon className="size-[9px]">{icons.brackets}</Icon>
          <Icon className="size-[9px]">{icons.renderTime}</Icon>
        </div>
        <p className="ml-1.5 w-[143px]">Frame Render Time: <span className="ml-1 text-[#5fd8b0]">0ms</span></p>
        <button className="h-[11px] w-[90px] bg-[#1d1d1d] whitespace-nowrap">Toggle Switches / Modes</button>
        <Icon className="ml-[94px] size-2"><path d="M1 8 L6 4 L11 8 Z" fill="currentColor" stroke="none" /></Icon>
        <input
          type="range"
          aria-label="Timeline zoom"
          defaultValue={0}
          className="mr-1.5 ml-[7px] h-px w-[34px] appearance-none bg-[#505050] [&::-webkit-slider-thumb]:size-[7px] [&::-webkit-slider-thumb]:appearance-none [&::-webkit-slider-thumb]:rounded-full [&::-webkit-slider-thumb]:border [&::-webkit-slider-thumb]:border-[#b0b0b0] [&::-webkit-slider-thumb]:bg-[#232323]"
        />
        <Icon><path d="M0 9 L3.6 5 L5 6.4 L7.6 3 L12 9 Z" fill="currentColor" stroke="none" /></Icon>
      </div>
      <span className="absolute bottom-0 left-[167px] h-px w-[33px] bg-[#4a4a4a]" />
    </section>
  );
}

export default function App() {
  return (
    <div className="relative flex h-screen flex-col overflow-hidden bg-[#161616] font-['Noto_Sans_CJK_SC',sans-serif] text-[8px] leading-[11px]">
      <nav className="flex h-[13px] shrink-0 items-center gap-[9px] bg-white pl-[5px] font-['Open_Sans',sans-serif] text-black">
        {["File", "Edit", "Composition", "Layer", "Effect", "Animation", "View", "Window", "Help"].map((m) => (
          <button key={m}>{m}</button>
        ))}
      </nav>
      <Toolbar />
      <main className="flex min-h-0 flex-[429_1_0%] pb-0.5 pl-0.5">
        <ProjectPanel />
        <div className="ml-0.5 flex min-w-0 flex-1 pt-px">
          <CompositionPanel />
        </div>
        <div className="ml-[3px] flex">
          <SidePanels />
        </div>
      </main>
      <Timeline />
      <svg className="pointer-events-none absolute top-0 left-0 h-[200px] w-[310px]" viewBox="0 0 310 200" aria-hidden="true">
        <path d="M217 45 L296 192" stroke="#5fe3c3" strokeWidth="5" strokeLinecap="round" />
        <path d="M207 27 L228 44 L210 53 Z" fill="#5fe3c3" />
      </svg>
      <svg className="pointer-events-none absolute top-[158px] right-[139px] h-3 w-2" viewBox="0 0 8 12" aria-hidden="true">
        <path d="M0.5 0.5 V10 L2.8 8 L4.4 11.5 L6 10.8 L4.6 7.4 H7.6 Z" fill="#fff" stroke="#222" strokeWidth="0.5" />
      </svg>
    </div>
  );
}
